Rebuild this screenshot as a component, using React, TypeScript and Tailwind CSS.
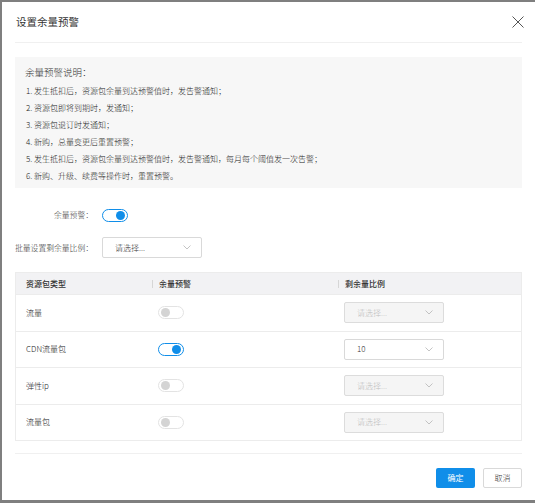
import React from 'react'

const font = { fontFamily: '"Noto Sans CJK SC", "Noto Sans", sans-serif' }

const notes = [
  '1. 发生抵扣后，资源包余量到达预警值时，发告警通知；',
  '2. 资源包即将到期时，发通知；',
  '3. 资源包退订时发通知；',
  '4. 新购，总量变更后重置预警；',
  '5. 发生抵扣后，资源包余量到达预警值时，发告警通知，每月每个阈值发一次告警；',
  '6. 新购、升级、续费等操作时，重置预警。',
]

const rows = [
  { name: '流量', on: false, value: '' },
  { name: 'CDN流量包', on: true, value: '10' },
  { name: '弹性ip', on: false, value: '' },
  { name: '流量包', on: false, value: '' },
]

function Toggle({ on }: { on: boolean }) {
  return (
    <div
      className={`w-[26px] h-[13px] rounded-full border bg-white flex items-center px-[2px] ${
        on ? 'border-[#108ee9] justify-end' : 'border-[#e3e3e3] justify-start'
      }`}
    >
      <div className={`w-[9px] h-[9px] rounded-full ${on ? 'bg-[#108ee9]' : 'bg-[#d4d4d4]'}`}></div>
    </div>
  )
}

function Chevron() {
  return (
    <svg width="8" height="5" viewBox="0 0 8 5" fill="none">
      <path d="M0.5 0.5L4 4L7.5 0.5" stroke="#b5b5b5" strokeWidth="0.8" />
    </svg>
  )
}

function Select({ value, disabled }: { value?: string; disabled?: boolean }) {
  return (
    <div
      className={`w-[100px] h-[21px] rounded-[2px] border flex items-center justify-between pl-[12px] pr-[10px] text-[8px] ${
        disabled ? 'bg-[#f5f5f5] border-[#dcdcdc] text-[#bdbdbd]' : 'bg-white border-[#d9d9d9] text-[#333]'
      }`}
    >
      <span>{value || '请选择...'}</span>
      <Chevron />
    </div>
  )
}

export default function App() {
  return (
    <div className="w-[535px] h-[503px] bg-[#7f7f7f] pt-[2px] pl-[2px] overflow-hidden font-light" style={font}>
      <div className="w-[533px] h-[498px] bg-white flex flex-col">
        {/* header */}
        <div className="h-[41px] mx-[13px] border-b border-[#f0f0f0] flex items-center justify-between">
          <span className="pl-[1px] text-[10.5px] text-[#333] font-normal">设置余量预警</span>
          <svg width="12" height="12" viewBox="0 0 12 12" className="mr-[-2px]">
            <path d="M0.5 0.5L11.5 11.5M11.5 0.5L0.5 11.5" stroke="#555" strokeWidth="1" />
          </svg>
        </div>

        <div className="px-[13px] pt-[14px] flex flex-col">
          {/* notes */}
          <div className="bg-[#f7f7f7] pt-[8px] pb-[4px] pl-[10px] text-[#222]">
            <p className="text-[9.5px] leading-[14px] mb-[3px] text-[#333]">余量预警说明：</p>
            {notes.map((n) => (
              <p key={n} className="text-[8px] leading-[17px] pl-[1px]">
                {n}
              </p>
            ))}
          </div>

          <div className="mt-[17px] h-[20px] flex items-center text-[7.8px] text-[#333]">
            <span className="w-[78px] flex justify-end whitespace-nowrap">余量预警：</span>
            <div className="ml-[9px]">
              <Toggle on />
            </div>
          </div>

          <div className="mt-[12px] flex items-center text-[7.8px] text-[#333]">
            <span className="w-[78px] flex justify-end whitespace-nowrap">批量设置剩余量比例：</span>
            <div className="ml-[9px]">
              <Select />
            </div>
          </div>

          {/* table */}
          <div className="mt-[14px] border border-[#ececec] text-[8px] text-[#222]">
            <div className="h-[21px] bg-[#f2f2f4] flex items-center text-[#333] font-medium">
              <div className="w-[136px] pl-[10px]">资源包类型</div>
              <div className="w-[186px] flex items-center">
                <span className="w-px h-[8px] bg-[#d6d6d6] mr-[6px]"></span>
                余量预警
              </div>
              <div className="flex-1 flex items-center">
                <span className="w-px h-[8px] bg-[#d6d6d6] mr-[6px]"></span>
                剩余量比例
              </div>
            </div>
            {rows.map((r) => (
              <div key={r.name} className="h-[36.5px] border-t border-[#ececec] flex items-center">
                <div className="w-[136px] pl-[10px]">{r.name}</div>
                <div className="w-[186px] pl-[6px]">
                  <Toggle on={r.on} />
                </div>
                <div className="flex-1 pl-[6px]">
                  <Select value={r.value} disabled={!r.on} />
                </div>
              </div>
            ))}
          </div>
        </div>

        {/* footer */}
        <div className="mx-[13px] mt-[12px] border-t border-[#f0f0f0] pt-[14px] flex justify-end gap-[8px] text-[8px]">
          <button className="w-[39px] h-[20px] rounded-[2px] bg-[#108ee9] text-white font-normal">确定</button>
          <button className="w-[39px] h-[20px] rounded-[2px] border border-[#d9d9d9] bg-white text-[#333]">取消</button>
        </div>
      </div>
    </div>
  )
}
